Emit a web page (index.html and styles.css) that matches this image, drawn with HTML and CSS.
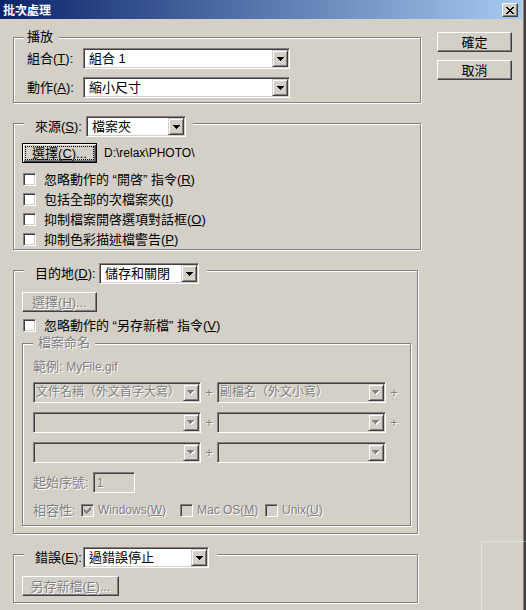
FILE: index.html
```html
<!DOCTYPE html>
<html lang="zh-Hant">
<head>
<meta charset="utf-8">
<title>批次處理</title>
<link rel="stylesheet" href="styles.css">
</head>
<body>
<div class="window">
  <div class="frame">
    <div class="titlebar">
      <span class="title">批次處理</span>
      <span class="close"><svg width="8" height="7" viewBox="0 0 8 7" shape-rendering="crispEdges"><path fill="#000" d="M0 0h2v1H0z M6 0h2v1H6z M1 1h2v1H1z M5 1h2v1H5z M2 2h4v1H2z M3 3h2v1H3z M2 4h4v1H2z M1 5h2v1H1z M5 5h2v1H5z M0 6h2v1H0z M6 6h2v1H6z"/></svg></span>
    </div>
    <div class="client">
      <div class="left">

        <div class="group g-play">
          <div class="legend legend-text lg-play">播放</div>
          <div class="play-body">
            <div class="row">
              <span class="lbl w-play">組合(<u>T</u>):</span>
              <div class="combo w207"><span class="val">組合 1</span><span class="drop"><svg width="7" height="4" viewBox="0 0 7 4" shape-rendering="crispEdges"><path class="arrow" d="M0 0h7v1H0z M1 1h5v1H1z M2 2h3v1H2z M3 3h1v1H3z"/></svg></span></div>
            </div>
            <div class="row">
              <span class="lbl w-play">動作(<u>A</u>):</span>
              <div class="combo w207"><span class="val">縮小尺寸</span><span class="drop"><svg width="7" height="4" viewBox="0 0 7 4" shape-rendering="crispEdges"><path class="arrow" d="M0 0h7v1H0z M1 1h5v1H1z M2 2h3v1H2z M3 3h1v1H3z"/></svg></span></div>
            </div>
          </div>
        </div>

        <div class="group g-src">
          <div class="legend lg-src">
            <span class="lbl w-src">來源(<u>S</u>):</span>
            <div class="combo w100"><span class="val">檔案夾</span><span class="drop"><svg width="7" height="4" viewBox="0 0 7 4" shape-rendering="crispEdges"><path class="arrow" d="M0 0h7v1H0z M1 1h5v1H1z M2 2h3v1H2z M3 3h1v1H3z"/></svg></span></div>
          </div>
          <div class="src-body">
            <div class="btn-line">
              <div class="btn default w75"><span class="focus">選擇(<u>C</u>)...</span></div>
              <span class="path latin">D:\relax\PHOTO\</span>
            </div>
            <div class="checks">
              <div class="chk"><span class="cb"></span><span>忽略動作的 “開啓” 指令(<u>R</u>)</span></div>
              <div class="chk"><span class="cb"></span><span>包括全部的次檔案夾(<u>I</u>)</span></div>
              <div class="chk"><span class="cb"></span><span>抑制檔案開啓選項對話框(<u>O</u>)</span></div>
              <div class="chk"><span class="cb"></span><span>抑制色彩描述檔警告(<u>P</u>)</span></div>
            </div>
          </div>
        </div>

        <div class="group g-dst">
          <div class="legend lg-dst">
            <span class="lbl w-dst">目的地(<u>D</u>):</span>
            <div class="combo w100"><span class="val">儲存和關閉</span><span class="drop"><svg width="7" height="4" viewBox="0 0 7 4" shape-rendering="crispEdges"><path class="arrow" d="M0 0h7v1H0z M1 1h5v1H1z M2 2h3v1H2z M3 3h1v1H3z"/></svg></span></div>
          </div>
          <div class="dst-body">
            <div class="btn w75"><span class="dis">選擇(<u>H</u>)...</span></div>
            <div class="chk chk-dst"><span class="cb"></span><span>忽略動作的 “另存新檔” 指令(<u>V</u>)</span></div>

            <div class="group sub">
              <div class="legend legend-text lg-sub dis">檔案命名</div>
              <div class="sub-body">
                <div class="example dis">範例: <span class="latin">MyFile.gif</span></div>
                <div class="name-rows">
                  <div class="name-row">
                    <div class="combo off w168"><span class="val small dis">文件名稱（外文首字大寫）</span><span class="drop"><svg width="8" height="5" viewBox="0 0 8 5" shape-rendering="crispEdges"><path fill="#fff" d="M1 1h7v1H1z M2 2h5v1H2z M3 3h3v1H3z M4 4h1v1H4z"/><path fill="#808080" d="M0 0h7v1H0z M1 1h5v1H1z M2 2h3v1H2z M3 3h1v1H3z"/></svg></span></div>
                    <span class="plus dis">+</span>
                    <div class="combo off w169"><span class="val small dis">副檔名（外文小寫）</span><span class="drop"><svg width="8" height="5" viewBox="0 0 8 5" shape-rendering="crispEdges"><path fill="#fff" d="M1 1h7v1H1z M2 2h5v1H2z M3 3h3v1H3z M4 4h1v1H4z"/><path fill="#808080" d="M0 0h7v1H0z M1 1h5v1H1z M2 2h3v1H2z M3 3h1v1H3z"/></svg></span></div>
                    <span class="plus dis">+</span>
                  </div>
                  <div class="name-row">
                    <div class="combo off w168"><span class="val"></span><span class="drop"><svg width="8" height="5" viewBox="0 0 8 5" shape-rendering="crispEdges"><path fill="#fff" d="M1 1h7v1H1z M2 2h5v1H2z M3 3h3v1H3z M4 4h1v1H4z"/><path fill="#808080" d="M0 0h7v1H0z M1 1h5v1H1z M2 2h3v1H2z M3 3h1v1H3z"/></svg></span></div>
                    <span class="plus dis">+</span>
                    <div class="combo off w169"><span class="val"></span><span class="drop"><svg width="8" height="5" viewBox="0 0 8 5" shape-rendering="crispEdges"><path fill="#fff" d="M1 1h7v1H1z M2 2h5v1H2z M3 3h3v1H3z M4 4h1v1H4z"/><path fill="#808080" d="M0 0h7v1H0z M1 1h5v1H1z M2 2h3v1H2z M3 3h1v1H3z"/></svg></span></div>
                    <span class="plus dis">+</span>
                  </div>
                  <div class="name-row">
                    <div class="combo off w168"><span class="val"></span><span class="drop"><svg width="8" height="5" viewBox="0 0 8 5" shape-rendering="crispEdges"><path fill="#fff" d="M1 1h7v1H1z M2 2h5v1H2z M3 3h3v1H3z M4 4h1v1H4z"/><path fill="#808080" d="M0 0h7v1H0z M1 1h5v1H1z M2 2h3v1H2z M3 3h1v1H3z"/></svg></span></div>
                    <span class="plus dis">+</span>
                    <div class="combo off w169"><span class="val"></span><span class="drop"><svg width="8" height="5" viewBox="0 0 8 5" shape-rendering="crispEdges"><path fill="#fff" d="M1 1h7v1H1z M2 2h5v1H2z M3 3h3v1H3z M4 4h1v1H4z"/><path fill="#808080" d="M0 0h7v1H0z M1 1h5v1H1z M2 2h3v1H2z M3 3h1v1H3z"/></svg></span></div>
                  </div>
                </div>
                <div class="start-row">
                  <span class="lbl w-start dis">起始序號:</span>
                  <div class="field off"><span class="dis latin">1</span></div>
                </div>
                <div class="compat-row">
                  <span class="lbl w-compat dis">相容性:</span>
                  <span class="cb off"><svg width="7" height="7" viewBox="0 0 7 7" shape-rendering="crispEdges"><path fill="#808080" d="M6 0h1v1H6z M5 1h2v1H5z M0 2h1v1H0z M4 2h3v1H4z M0 3h2v1H0z M3 3h3v1H3z M0 4h5v1H0z M1 5h3v1H1z M2 6h1v1H2z"/></svg></span>
                  <span class="dis latin w-win">Windows(<u>W</u>)</span>
                  <span class="cb off"></span>
                  <span class="dis latin w-mac">Mac OS(<u>M</u>)</span>
                  <span class="cb off"></span>
                  <span class="dis latin">Unix(<u>U</u>)</span>
                </div>
              </div>
            </div>
          </div>
        </div>

        <div class="group g-err">
          <div class="legend lg-err">
            <span class="lbl w-err">錯誤(<u>E</u>):</span>
            <div class="combo w126"><span class="val">過錯誤停止</span><span class="drop"><svg width="7" height="4" viewBox="0 0 7 4" shape-rendering="crispEdges"><path class="arrow" d="M0 0h7v1H0z M1 1h5v1H1z M2 2h3v1H2z M3 3h1v1H3z"/></svg></span></div>
          </div>
          <div class="err-body">
            <div class="btn w97"><span class="dis">另存新檔(<u>E</u>)...</span></div>
          </div>
        </div>

      </div>
      <div class="right">
        <div class="btn w75">確定</div>
        <div class="btn w75">取消</div>
      </div>
    </div>
  </div>
  <div class="ghost"></div>
</div>
</body>
</html>
```

FILE: styles.css
```css
* { box-sizing: border-box; }
html, body { margin: 0; padding: 0; }
body {
  width: 526px;
  height: 610px;
  overflow: hidden;
  background: #d4d0c8;
  font-family: "Liberation Sans", "Noto Sans CJK TC", sans-serif;
  font-size: 13px;
  line-height: 15px;
  color: #000;
}
u { text-decoration: underline; text-underline-offset: 1px; }

.window {
  position: relative;
  width: 526px;
  height: 610px;
  border-right: 2px solid #404040;
}
.frame {
  height: 100%;
  border-right: 1px solid #808080;
  padding-right: 1px;
}

/* title bar */
.titlebar {
  height: 19px;
  display: flex;
  align-items: flex-start;
  background: linear-gradient(to right, #0a246a, #a6caf0);
}
.title {
  margin-top: 2px;
  padding-left: 3px;
  color: #fff;
  font-family: "Noto Sans CJK TC", sans-serif;
  font-weight: bold;
  font-size: 12px;
  line-height: 16px;
}
.close {
  margin: 3px 4px 0 auto;
  width: 16px;
  height: 14px;
  display: flex;
  align-items: center;
  justify-content: center;
  background: #d4d0c8;
  border: 1px solid;
  border-color: #fff #404040 #404040 #fff;
  box-shadow: inset -1px -1px 0 #808080;
}

/* client */
.client {
  display: flex;
  padding-left: 13px;
}
.left { width: 408px; }
.right {
  margin-left: 16px;
  padding-top: 13px;
  display: flex;
  flex-direction: column;
  gap: 8px;
}

/* etched group boxes */
.group {
  border: 1px solid #808080;
  box-shadow: inset 1px 1px 0 #fff, 1px 1px 0 #fff;
}
.g-play { margin-top: 18px; }
.g-src, .g-dst, .g-err { margin-top: 20px; }
.g-dst, .g-err { width: 405px; }

.legend {
  display: flex;
  align-items: center;
  width: max-content;
  margin-top: -8px;
  margin-left: 10px;
  background: #d4d0c8;
}
.legend-text { line-height: 14px; }
.lg-play { padding: 0 6px 0 3px; }
.lg-src { padding: 0 7px 0 11px; }
.lg-dst { padding: 0 8px 0 11px; }
.lg-err { padding: 0 8px 0 11px; }
.lg-sub { padding: 0 5px; }

.lbl { white-space: nowrap; flex: none; }
.w-play { width: 56px; }
.w-src { width: 51px; }
.w-dst { width: 64px; }
.w-err { width: 48px; }
.w-start { width: 60px; }
.w-compat { width: 48px; }

.play-body {
  padding: 4px 0 4px 13px;
  display: flex;
  flex-direction: column;
  gap: 8px;
}
.row { display: flex; align-items: center; }

/* combo boxes */
.combo {
  display: flex;
  flex: none;
  height: 21px;
  padding: 1px;
  background: #fff;
  border: 1px solid;
  border-color: #808080 #fff #fff #808080;
  box-shadow: inset 1px 1px 0 #404040, inset -1px -1px 0 #d4d0c8;
}
.combo.off { background: #d4d0c8; }
.combo .val {
  flex: 1;
  min-width: 0;
  padding-left: 4px;
  line-height: 17px;
  white-space: nowrap;
  overflow: hidden;
}
.combo.off .val { padding-left: 1px; }
.combo .val.small { font-size: 12px; }
.drop {
  width: 16px;
  height: 17px;
  flex: none;
  display: flex;
  align-items: center;
  justify-content: center;
  background: #d4d0c8;
  border: 1px solid;
  border-color: #d4d0c8 #404040 #404040 #d4d0c8;
  box-shadow: inset 1px 1px 0 #fff, inset -1px -1px 0 #808080;
}
.arrow { fill: #000; }
.w100 { width: 100px; }
.w126 { width: 126px; }
.w168 { width: 168px; }
.w169 { width: 169px; }
.w207 { width: 207px; }

/* buttons */
.btn {
  height: 20px;
  display: flex;
  align-items: center;
  justify-content: center;
  background: #d4d0c8;
  border: 1px solid;
  border-color: #fff #404040 #404040 #fff;
  box-shadow: inset -1px -1px 0 #808080;
  white-space: nowrap;
}
.btn.default {
  padding: 2px;
  border-color: #000;
  box-shadow: inset 1px 1px 0 #fff, inset -1px -1px 0 #404040, inset -2px -2px 0 #808080;
}
.focus {
  flex: 1;
  align-self: stretch;
  display: flex;
  align-items: center;
  justify-content: center;
  border: 1px dotted #000;
}
.w75 { width: 75px; }
.w97 { width: 97px; }

/* disabled text */
.dis { color: #808080; text-shadow: 1px 1px 0 #fff; }
.latin { font-size: 12px; }

/* checkbox */
.cb {
  width: 13px;
  height: 13px;
  flex: none;
  display: flex;
  align-items: center;
  justify-content: center;
  background: #fff;
  border: 1px solid;
  border-color: #808080 #fff #fff #808080;
  box-shadow: inset 1px 1px 0 #404040, inset -1px -1px 0 #d4d0c8;
}
.cb.off { background: #d4d0c8; }
.chk {
  display: flex;
  align-items: center;
  height: 19px;
  white-space: nowrap;
}
.chk .cb { margin-left: 1px; margin-right: 8px; }

/* source */
.src-body { padding: 6px 0 0 8px; }
.btn-line { display: flex; align-items: center; }
.path { margin-left: 7px; }
.checks {
  margin-top: 7px;
  display: flex;
  flex-direction: column;
  gap: 1px;
}

/* destination */
.dst-body { padding: 8px 0 7px 8px; }
.chk-dst { margin-top: 4px; }
.sub { width: 389px; margin-top: 8px; }
.sub-body { padding: 10px 0 5px 10px; }
.example { line-height: 14px; white-space: nowrap; }
.name-rows {
  margin-top: 8px;
  display: flex;
  flex-direction: column;
  gap: 9px;
}
.name-row { display: flex; align-items: center; }
.plus { width: 16px; text-align: center; flex: none; }
.start-row { margin-top: 9px; display: flex; align-items: center; }
.field {
  width: 42px;
  height: 21px;
  padding: 1px 3px;
  line-height: 17px;
  border: 1px solid;
  border-color: #808080 #fff #fff #808080;
  box-shadow: inset 1px 1px 0 #404040, inset -1px -1px 0 #d4d0c8;
}
.field.off { background: #d4d0c8; }
.compat-row {
  margin-top: 8px;
  height: 19px;
  display: flex;
  align-items: center;
  white-space: nowrap;
}
.compat-row .cb { margin-right: 4px; }
.w-win { width: 82px; }
.w-mac { width: 68px; }

/* error */
.err-body { padding: 8px 0 6px 8px; }

/* faint watermark at bottom right */
.ghost {
  position: absolute;
  left: 481px;
  top: 541px;
  width: 45px;
  height: 69px;
  border-top: 1px solid rgba(255, 255, 255, 0.35);
  border-left: 1px solid rgba(255, 255, 255, 0.35);
  pointer-events: none;
}
```
